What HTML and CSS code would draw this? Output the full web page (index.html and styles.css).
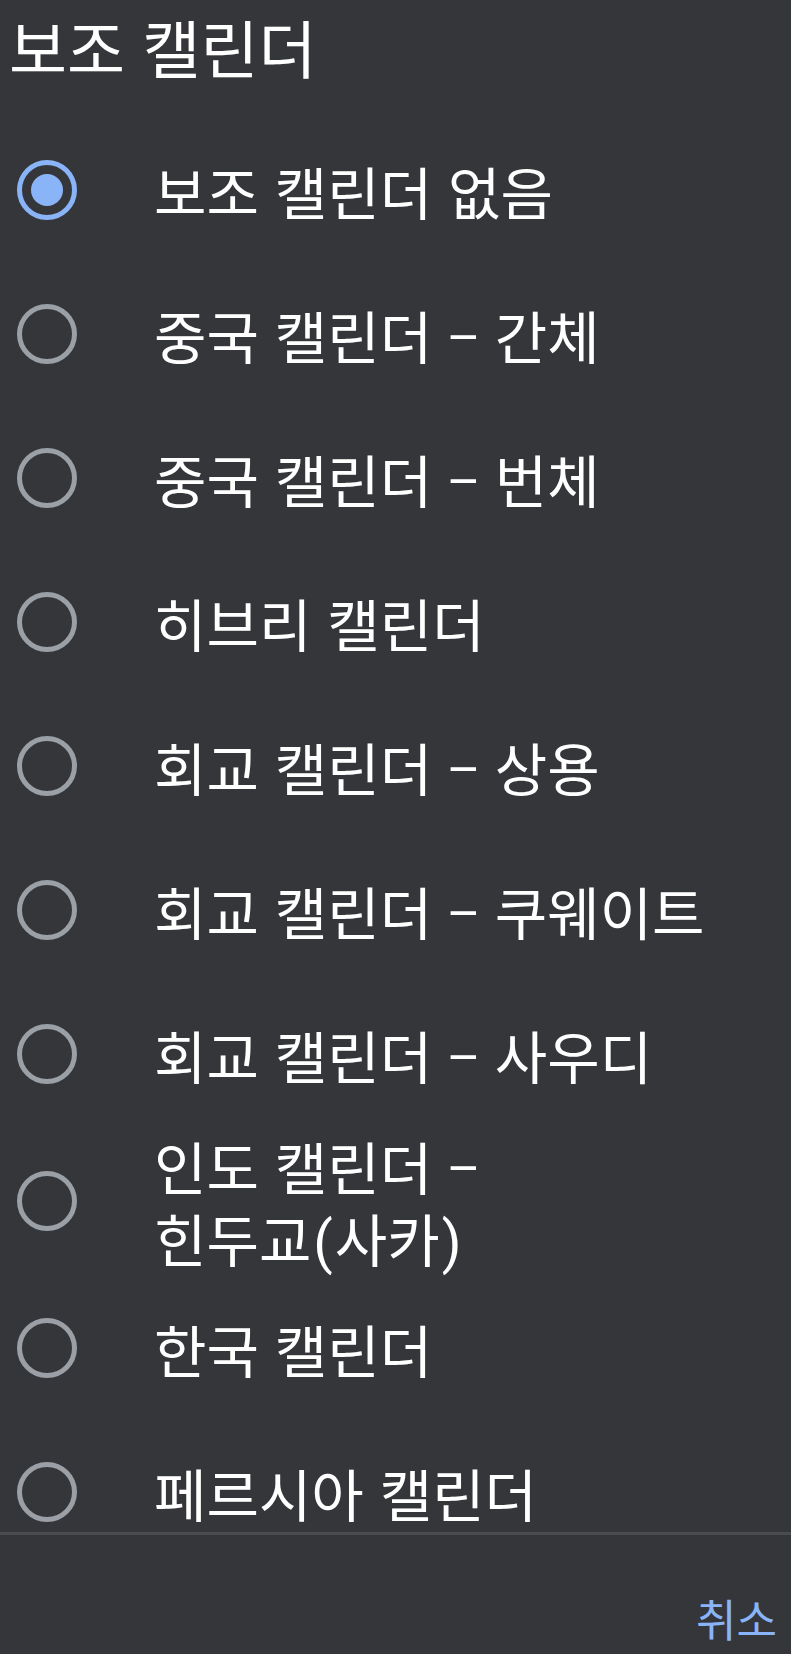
FILE: index.html
```html
<!DOCTYPE html>
<html lang="ko">
<head>
<meta charset="utf-8">
<link rel="stylesheet" href="styles.css">
</head>
<body>
<div class="dialog">
  <h1 class="title">보조 캘린더</h1>
  <div class="list">
    <div class="item selected"><span class="radio"></span><span class="label">보조 캘린더 없음</span></div>
    <div class="item"><span class="radio"></span><span class="label">중국 캘린더 – 간체</span></div>
    <div class="item"><span class="radio"></span><span class="label">중국 캘린더 – 번체</span></div>
    <div class="item"><span class="radio"></span><span class="label">히브리 캘린더</span></div>
    <div class="item"><span class="radio"></span><span class="label">회교 캘린더 – 상용</span></div>
    <div class="item"><span class="radio"></span><span class="label">회교 캘린더 – 쿠웨이트</span></div>
    <div class="item"><span class="radio"></span><span class="label">회교 캘린더 – 사우디</span></div>
    <div class="item"><span class="radio"></span><span class="label">인도 캘린더 –<br>힌두교<span class="paren">(</span>사카<span class="paren">)</span></span></div>
    <div class="item"><span class="radio"></span><span class="label">한국 캘린더</span></div>
    <div class="item"><span class="radio"></span><span class="label">페르시아 캘린더</span></div>
  </div>
  <div class="divider"></div>
  <div class="actions"><span class="button">취소</span></div>
</div>
</body>
</html>
```

FILE: styles.css
```css
html, body {
  margin: 0;
  padding: 0;
  background: #35363a;
}
body {
  font-family: "Noto Sans CJK KR", "Noto Sans", sans-serif;
  color: #ffffff;
}
.dialog {
  width: 791px;
  height: 1654px;
  display: flex;
  flex-direction: column;
  overflow: hidden;
}
.title {
  margin: 0;
  height: 118px;
  box-sizing: border-box;
  padding: 6px 0 0 9px;
  font-size: 63px;
  font-weight: 400;
  line-height: 80px;
}
.list {
  height: 1414px;
  overflow: hidden;
  flex: none;
}
.item {
  display: flex;
  align-items: center;
  min-height: 144px;
  box-sizing: border-box;
  padding: 3px 0 3px 17px;
}
.radio {
  flex: none;
  width: 60px;
  height: 60px;
  box-sizing: border-box;
  border: 5px solid #9aa0a6;
  border-radius: 50%;
  display: flex;
  align-items: center;
  justify-content: center;
  margin-right: 77px;
}
.selected .radio {
  border-color: #8ab4f8;
}
.selected .radio::after {
  content: "";
  width: 32px;
  height: 32px;
  border-radius: 50%;
  background: #8ab4f8;
}
.label {
  font-size: 57px;
  line-height: 72px;
}
.paren {
  font-family: Roboto, "Noto Sans CJK KR", sans-serif;
  line-height: 0;
  padding: 0 2px;
}
.divider {
  height: 3px;
  background: #4a4b4f;
  flex: none;
}
.actions {
  flex: 1;
  display: flex;
  justify-content: flex-end;
  align-items: center;
  padding: 46px 14px 0 0;
}
.button {
  color: #8ab4f8;
  font-size: 44px;
  line-height: 60px;
}
```
